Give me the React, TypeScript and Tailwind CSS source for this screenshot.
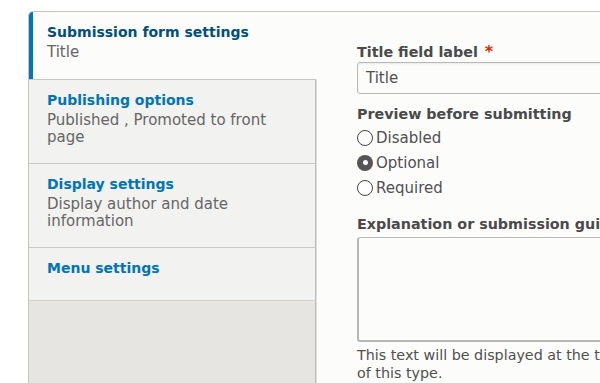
import React from "react";

const font = { fontFamily: '"DejaVu Sans", "Liberation Sans", sans-serif' };

function Tab({
  title,
  desc,
  active,
  last,
}: {
  title: string;
  desc?: string[];
  active?: boolean;
  last?: boolean;
}) {
  const descEl = desc && (
    <div className="mt-[2px] text-[15px] leading-[17px] text-[#666]">
      {desc.map((d) => (
        <div key={d}>{d}</div>
      ))}
    </div>
  );
  if (active) {
    return (
      <li className="relative z-10 -mr-[1px] bg-[#fcfcfa] border-l-4 border-[#0074bd] pl-[14px] pt-[10px] pb-[18px]">
        <div className="text-[14px] leading-[20px] font-bold text-[#004f80]">{title}</div>
        {descEl}
      </li>
    );
  }
  return (
    <li
      className={
        "bg-[#f2f2f0] border-t border-[#c8c8c4] border-r border-r-[#b8b8b4] shadow-[1px_0_0_#e2e2de] pl-[18px] pt-[10px] " +
        (last ? "pb-[22px]" : "pb-[17px]")
      }
    >
      <div className="text-[14px] leading-[20px] font-bold text-[#0074bd]">{title}</div>
      {descEl}
    </li>
  );
}

function Radio({ label, checked }: { label: string; checked?: boolean }) {
  return (
    <div className="flex items-center h-[25px]">
      {checked ? (
        <span className="w-[16px] h-[16px] rounded-full bg-[#555] flex items-center justify-center">
          <span className="w-[5px] h-[5px] rounded-full bg-white" />
        </span>
      ) : (
        <span className="w-[16px] h-[16px] rounded-full border border-[#444] bg-white" />
      )}
      <span className="ml-[3px] text-[15px] text-[#505050] leading-[20px]">{label}</span>
    </div>
  );
}

export default function App() {
  return (
    <div className="w-[600px] h-[383px] bg-white overflow-hidden pt-[11px] pl-[28px]" style={font}>
      <div className="flex h-[372px] border-t border-l border-[#c4c4c0] rounded-tl-[5px] bg-[#fcfcfa] overflow-hidden">
        <ul className="w-[287px] shrink-0 flex flex-col">
          <Tab title="Submission form settings" desc={["Title"]} active />
          <Tab title="Publishing options" desc={["Published , Promoted to front", "page"]} />
          <Tab title="Display settings" desc={["Display author and date", "information"]} />
          <Tab title="Menu settings" last />
          <li className="flex-1 bg-[#e6e5e1] border-t border-[#d2d2ce] border-r border-r-[#b8b8b4] shadow-[1px_0_0_#e2e2de]" />
        </ul>
        <div className="flex-1 pl-[41px] pt-[31px] min-w-0">
          <div className="whitespace-nowrap">
            <div className="text-[14.3px] leading-[18px] font-bold text-[#4a4a4a]">
              Title field label<span className="ml-[7px] text-[16px] text-[#e32700]">*</span>
            </div>
            <div className="mt-[1px] w-[300px] h-[32px] border border-[#b8b8b8] rounded-[3px] bg-[#fcfcfa] shadow-[inset_0_1px_2px_rgba(0,0,0,0.08)] flex items-center pl-[8px] text-[15px] text-[#505050]">
              Title
            </div>
            <div className="mt-[10px] text-[14.3px] leading-[20px] font-bold text-[#4a4a4a]">
              Preview before submitting
            </div>
            <div className="mt-[1px]">
              <Radio label="Disabled" />
              <Radio label="Optional" checked />
              <Radio label="Required" />
            </div>
            <div className="mt-[14px] text-[14.3px] leading-[20px] font-bold text-[#4a4a4a]">
              Explanation or submission guidelines
            </div>
            <div className="mt-[3px] w-[300px] h-[105px] border border-[#b8b8b8] border-l-2 border-b-2 rounded-[3px] bg-[#fcfcfa]" />
            <div className="mt-[4px] text-[14.3px] leading-[18px] text-[#505050]">
              <div>This text will be displayed at the top of the page when creating or editing content</div>
              <div>of this type.</div>
            </div>
          </div>
        </div>
      </div>
    </div>
  );
}
